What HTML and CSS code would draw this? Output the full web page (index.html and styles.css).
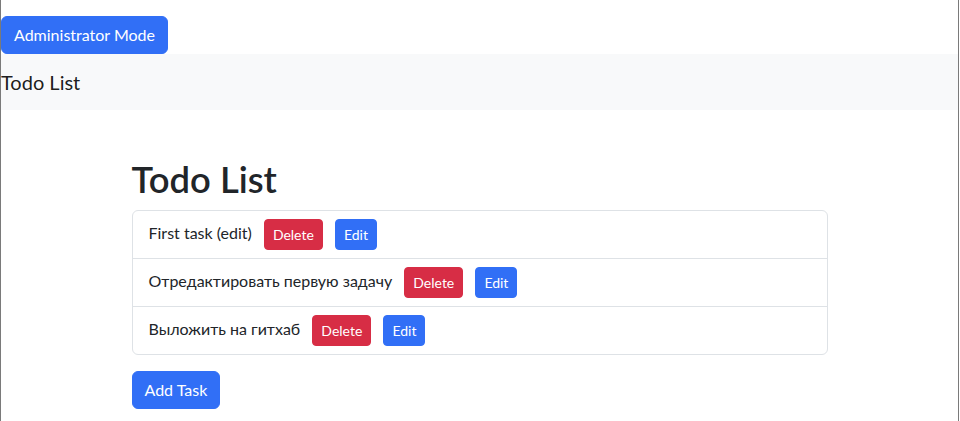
FILE: index.html
```html
<!DOCTYPE html>
<html lang="ru">
<head>
<meta charset="utf-8">
<title>Todo List</title>
<link rel="stylesheet" href="styles.css">
</head>
<body>
<div class="page">
  <div class="admin-bar">
    <button class="btn btn-primary">Administrator Mode</button>
  </div>
  <nav class="navbar">
    <span class="navbar-brand">Todo List</span>
  </nav>
  <main class="container">
    <h1 class="title">Todo List</h1>
    <ul class="list-group">
      <li class="list-group-item">First task (edit) <button class="btn btn-sm btn-danger">Delete</button> <button class="btn btn-sm btn-primary">Edit</button></li>
      <li class="list-group-item">Отредактировать первую задачу <button class="btn btn-sm btn-danger">Delete</button> <button class="btn btn-sm btn-primary">Edit</button></li>
      <li class="list-group-item">Выложить на гитхаб <button class="btn btn-sm btn-danger">Delete</button> <button class="btn btn-sm btn-primary">Edit</button></li>
    </ul>
    <button class="btn btn-primary add-btn">Add Task</button>
  </main>
</div>
</body>
</html>
```

FILE: styles.css
```css
* { box-sizing: border-box; }
html, body {
  margin: 0;
  padding: 0;
  background: #fff;
}
body {
  font-family: "Lato", "Noto Sans", sans-serif;
  font-size: 16px;
  line-height: 1.5;
  color: #212529;
}
.page {
  width: 959px;
  min-height: 421px;
  border-left: 1px solid #7a7a7a;
  border-right: 1px solid #7a7a7a;
}
.admin-bar {
  padding-top: 16px;
}
.btn {
  display: inline-block;
  font-family: inherit;
  font-size: 16px;
  line-height: 24px;
  padding: 6px 12px;
  border: 1px solid transparent;
  border-radius: 6px;
  color: #fff;
  vertical-align: middle;
  cursor: pointer;
}
.btn-primary { background: #316ff6; border-color: #316ff6; }
.btn-danger { background: #d72d45; border-color: #d72d45; }
.btn-sm {
  font-size: 14px;
  line-height: 21px;
  padding: 4px 8px;
  border-radius: 4px;
  margin-left: 8px;
}
.navbar {
  background: #f8f9fa;
  padding: 8px 0;
}
.navbar-brand {
  display: inline-block;
  font-size: 20px;
  line-height: 30px;
  padding: 5px 0;
  color: rgba(0,0,0,.9);
}
.container {
  width: 720px;
  margin: 48px auto 0;
  padding: 0 12px;
}
.title {
  font-size: 36.4px;
  font-weight: 600;
  line-height: 1.2;
  margin: 0 0 8px;
}
.list-group {
  list-style: none;
  margin: 0;
  padding: 0;
  border: 1px solid #dee2e6;
  border-radius: 6px;
}
.list-group-item {
  padding: 8px 16px;
  border-top: 1px solid #dee2e6;
}
.list-group-item:first-child { border-top: 0; }
.add-btn {
  margin-top: 16px;
}
```
